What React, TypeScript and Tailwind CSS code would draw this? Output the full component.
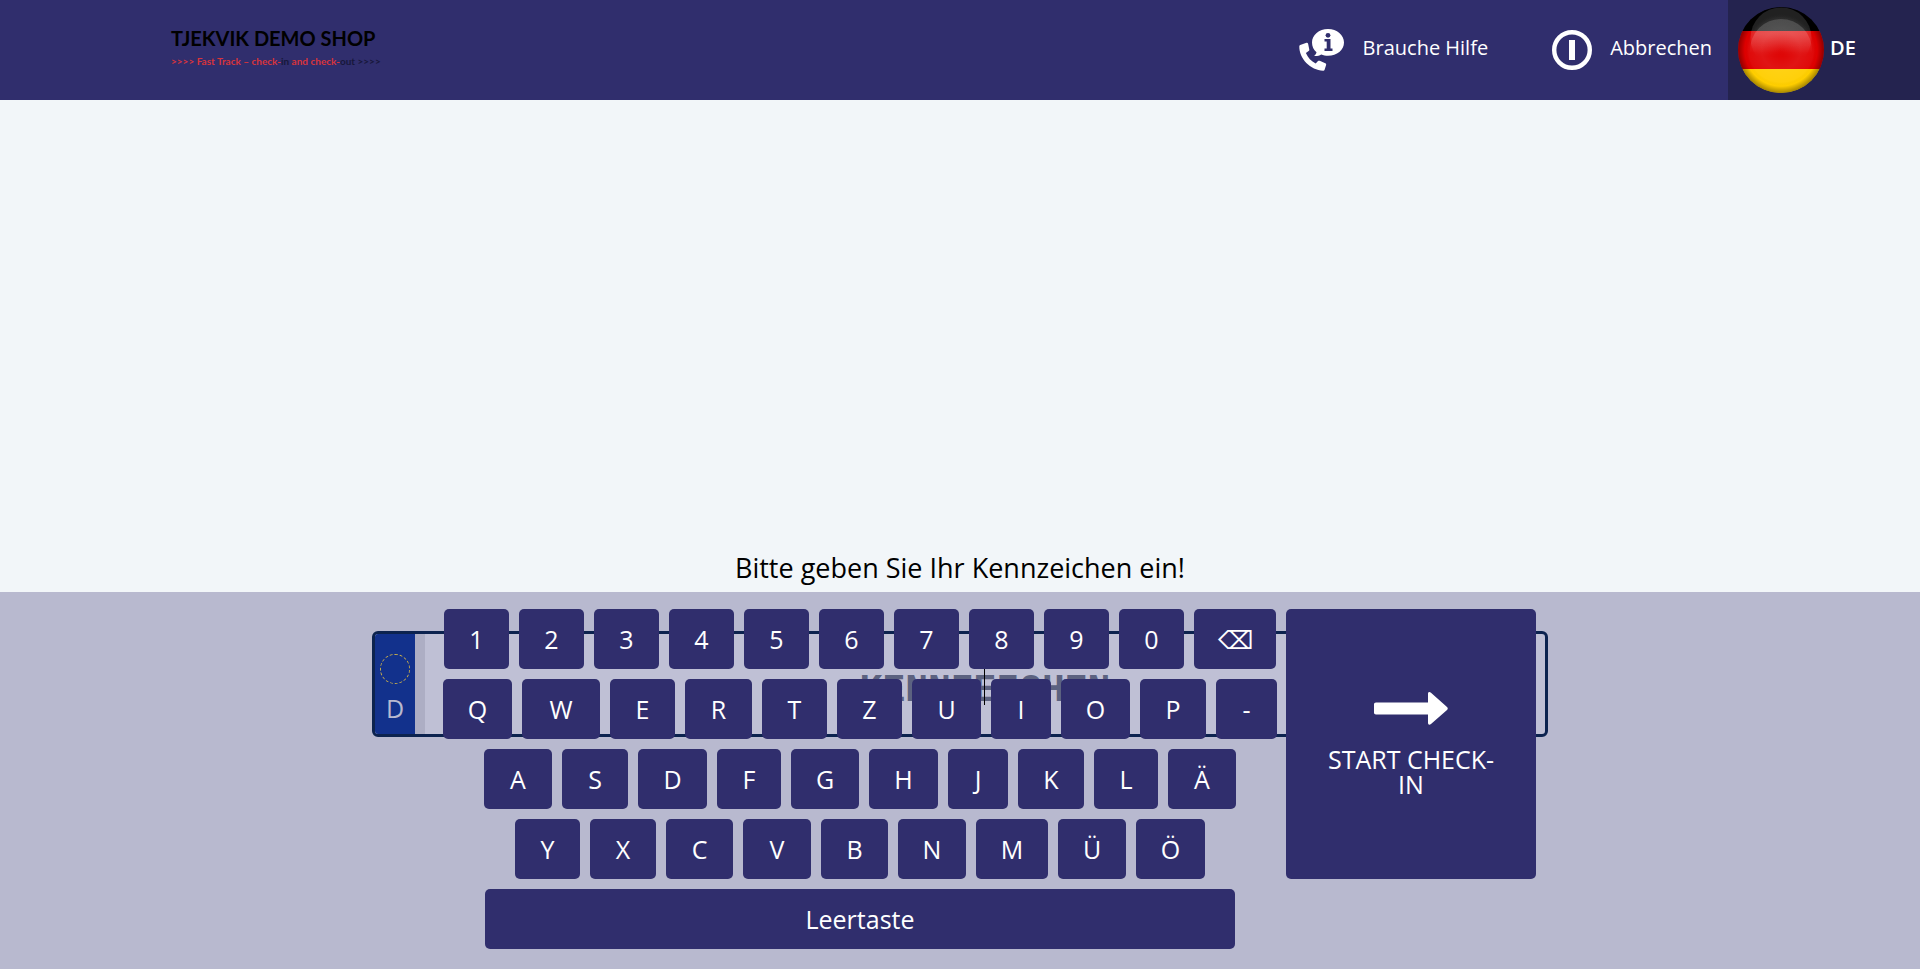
const key =
  "h-[60px] shrink-0 cursor-pointer rounded-[5px] bg-[#302e6d] text-center text-[25px] leading-none text-white";

const rows: { label: string; width: string; name?: string }[][] = [
  [
    ..."1234567890".split("").map((label) => ({ label, width: "w-[65px]" })),
    { label: "⌫", width: "w-[82px]", name: "Löschen" },
  ],
  [
    { label: "Q", width: "w-[69px]" },
    { label: "W", width: "w-[78px]" },
    { label: "E", width: "w-[65px]" },
    { label: "R", width: "w-[67px]" },
    { label: "T", width: "w-[65px]" },
    { label: "Z", width: "w-[65px]" },
    { label: "U", width: "w-[69px]" },
    { label: "I", width: "w-[60px]" },
    { label: "O", width: "w-[69px]" },
    { label: "P", width: "w-[66px]" },
    { label: "-", width: "w-[61px]" },
  ],
  [
    { label: "A", width: "w-[68px]" },
    { label: "S", width: "w-[66px]" },
    { label: "D", width: "w-[69px]" },
    { label: "F", width: "w-[64px]" },
    { label: "G", width: "w-[68px]" },
    { label: "H", width: "w-[69px]" },
    { label: "J", width: "w-[60px]" },
    { label: "K", width: "w-[66px]" },
    { label: "L", width: "w-[64px]" },
    { label: "Ä", width: "w-[68px]" },
  ],
  [
    { label: "Y", width: "w-[65px]" },
    { label: "X", width: "w-[66px]" },
    { label: "C", width: "w-[67px]" },
    { label: "V", width: "w-[68px]" },
    { label: "B", width: "w-[67px]" },
    { label: "N", width: "w-[68px]" },
    { label: "M", width: "w-[72px]" },
    { label: "Ü", width: "w-[68px]" },
    { label: "Ö", width: "w-[69px]" },
  ],
];

function Logo() {
  return (
    <a href="#" className="mb-1.5 ml-[171px] flex flex-col font-['Lato','Open_Sans',sans-serif] text-black">
      <span className="text-[20px] leading-6 font-bold whitespace-nowrap">TJEKVIK DEMO SHOP</span>
      <span className="mt-1 text-[10px] leading-[14px] font-bold whitespace-nowrap text-[#d8343c]">
        &gt;&gt;&gt;&gt; Fast Track – check-<span className="text-[#17173a]">in</span> and check-
        <span className="text-[#17173a]">out &gt;&gt;&gt;&gt;</span>
      </span>
    </a>
  );
}

function HelpIcon() {
  return (
    <svg viewBox="0 0 46 42" className="h-[42px] w-[46px]" fill="#fff" aria-hidden="true">
      <path d="M29 0C20 0 13 6 13 13.500c0 4 1.600 7.300 4.500 9.800-.2 1.500-1.200 2.700-2.500 3.700 2.800.3 5.300-.4 7.200-1.600 2.100.9 4.400 1.300 6.800 1.300 9 0 16-5.700 16-13.200S38 0 29 0z" />
      <path d="M1.200 16 7.500 13.800c.8-.2 1.400.1 1.600.9l1.200 5.700c.1.700-.1 1.200-.7 1.600l-2.700 2c2 4.700 5.300 8.200 9.800 10.500l2.300-2.400c.5-.5 1-.6 1.700-.3l5.600 2.400c.8.400 1 .9.800 1.700l-1.500 4.800c-.2.700-.7 1-1.400 1C11.500 41.500 0 29.500.3 17.300c0-.7.3-1.100.9-1.300z" />
      <circle cx="29" cy="6.300" r="2.400" fill="#302e6d" />
      <path d="M25.500 10h6v9.500h2V22h-8v-2.500h2.200v-7h-2.200z" fill="#302e6d" />
    </svg>
  );
}

function CancelIcon() {
  return (
    <svg viewBox="0 0 40 40" className="size-10" aria-hidden="true">
      <circle cx="20" cy="20" r="17.800" fill="none" stroke="#fff" strokeWidth="4.400" />
      <path d="M17 10h6v20h-6z" fill="#fff" />
    </svg>
  );
}

function GermanFlag() {
  return (
    <svg viewBox="0 0 86 86" className="size-[86px]" aria-hidden="true">
      <defs>
        <clipPath id="ball">
          <circle cx="43" cy="43" r="43" />
        </clipPath>
        <radialGradient id="shade" cx=".5" cy=".5" r=".5">
          <stop offset="0" stopColor="#fff" stopOpacity="0" />
          <stop offset=".45" stopColor="#fff" stopOpacity=".08" />
          <stop offset=".75" stopColor="#fff" stopOpacity=".04" />
          <stop offset=".84" stopColor="#000" stopOpacity="0" />
          <stop offset="1" stopColor="#000" stopOpacity=".35" />
        </radialGradient>
        <linearGradient id="cap" x1="0" y1="0" x2="0" y2="1">
          <stop offset="0" stopColor="#fff" stopOpacity=".13" />
          <stop offset=".4" stopColor="#fff" stopOpacity=".13" />
          <stop offset=".8" stopColor="#fff" stopOpacity="0" />
        </linearGradient>
        <linearGradient id="gloss" x1="0" y1="0" x2="0" y2="1">
          <stop offset="0" stopColor="#fff" stopOpacity=".16" />
          <stop offset=".25" stopColor="#fff" stopOpacity=".16" />
          <stop offset=".55" stopColor="#fff" stopOpacity="0" />
        </linearGradient>
      </defs>
      <g clipPath="url(#ball)">
        <path d="M0 0h86v24H0z" fill="#000" />
        <path d="M0 24h86v38H0z" fill="#de0000" />
        <path d="M0 62h86v24H0z" fill="#ffce00" />
        <circle cx="43" cy="43" r="43" fill="url(#shade)" />
        <circle cx="43" cy="31" r="30.500" fill="url(#cap)" />
        <circle cx="43" cy="43" r="31" fill="url(#gloss)" />
      </g>
    </svg>
  );
}

export default function App() {
  return (
    <div className="flex min-h-screen flex-col bg-[#f2f6f9] font-['Open_Sans','Noto_Sans',sans-serif]">
      <header className="flex h-[100px] items-center bg-[#302e6d] text-white">
        <Logo />
        <nav className="ml-auto flex h-full items-center text-[20px]">
          <button className="mr-16 flex cursor-pointer items-center gap-[18px]">
            <HelpIcon />
            <span className="pb-1">Brauche Hilfe</span>
          </button>
          <button className="mr-4 flex cursor-pointer items-center gap-[18px]">
            <CancelIcon />
            <span className="pb-1">Abbrechen</span>
          </button>
          <button className="flex h-full w-[192px] cursor-pointer items-center gap-1.5 bg-[#24234f] pl-[10px] font-semibold">
            <GermanFlag />
            <span className="pb-1">DE</span>
          </button>
        </nav>
      </header>

      <main className="flex grow flex-col justify-end">
        <label htmlFor="plate" className="pb-1 text-center text-[27px] leading-10 text-black">
          Bitte geben Sie Ihr Kennzeichen ein!
        </label>
        <section className="relative flex justify-center bg-[#b8b9cf] pt-[17px] pb-5">
          <div className="absolute inset-x-0 top-[39px] mx-auto flex h-[106px] w-[1176px] overflow-hidden rounded-md border-3 border-[#0c234f] bg-[#bfc0d5]">
            <div className="flex w-10 shrink-0 flex-col items-center bg-[#12318c] pt-5 text-[25px] leading-none text-[#b8b9cf]">
              <span className="size-[30px] rounded-full border border-dashed border-[#c9ae4a]" />
              <span className="mt-3">D</span>
            </div>
            <div className="w-[10px] shrink-0 bg-[#adaec4]" />
            <input
              id="plate"
              type="text"
              placeholder="KENNZEICHEN"
              className="min-w-0 grow bg-transparent pt-3 text-center font-['Liberation_Mono',monospace] text-[38px] font-bold outline-none placeholder:text-[#5c6280]"
            />
            <span className="absolute top-[35px] left-[609px] h-9 w-px bg-black" />
          </div>

          <div className="relative flex w-[1152px] justify-end">
            <div className="flex w-[852px] flex-col items-center gap-[10px]">
              {rows.map((row, i) => (
                <div key={i} className="flex gap-[10px]">
                  {row.map((k) => (
                    <button key={k.label} aria-label={k.name} className={`${key} ${k.width}`}>
                      {k.label}
                    </button>
                  ))}
                </div>
              ))}
              <button className={`${key} w-[750px]`}>Leertaste</button>
            </div>
            <button className="flex h-[270px] w-[250px] cursor-pointer flex-col items-center rounded-[5px] bg-[#302e6d] px-[34px] pt-[83px] text-[25px] leading-[25px] text-white">
              <svg viewBox="0 0 74 33" className="h-[33px] w-[74px]" fill="#fff" aria-hidden="true">
                <path d="M2 10.500h52V2c0-2 1.500-2.500 3-1.200L73 15c1 1 1 2 0 3L57 32c-1.500 1.300-3 .8-3-1.200v-8.300H2c-1.300 0-2-.7-2-2v-8c0-1.300.7-2 2-2z" />
              </svg>
              <span className="mt-[22px]">START CHECK-IN</span>
            </button>
          </div>
        </section>
      </main>
    </div>
  );
}
